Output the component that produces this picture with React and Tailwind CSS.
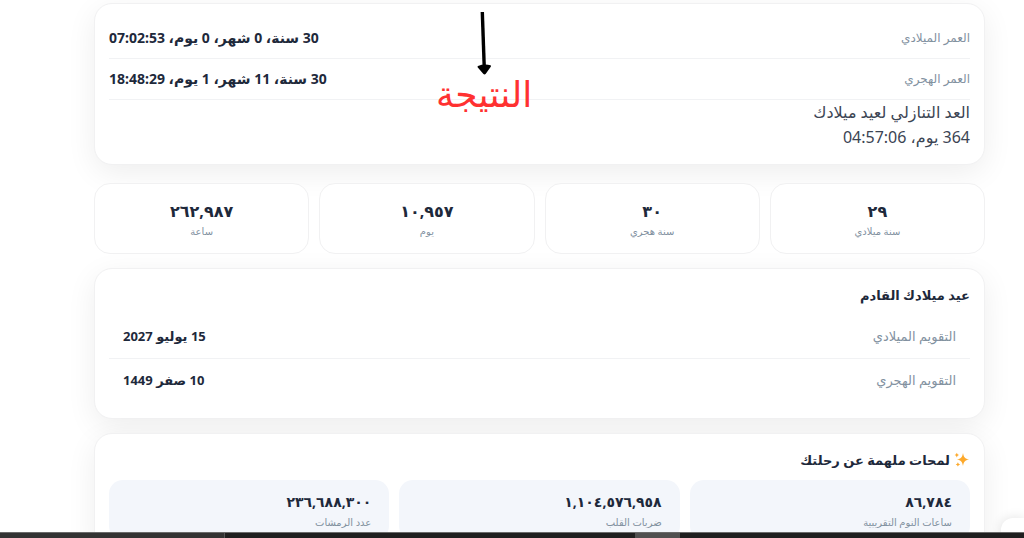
const ages = [
  { label: "العمر الميلادي", value: "30 سنة، 0 شهر، 0 يوم، 07:02:53" },
  { label: "العمر الهجري", value: "30 سنة، 11 شهر، 1 يوم، 18:48:29" },
];

const stats = [
  { label: "سنة ميلادي", value: "٢٩" },
  { label: "سنة هجري", value: "٣٠" },
  { label: "يوم", value: "١٠,٩٥٧" },
  { label: "ساعة", value: "٢٦٢,٩٨٧" },
];

const birthdays = [
  { label: "التقويم الميلادي", value: "15 يوليو 2027" },
  { label: "التقويم الهجري", value: "10 صفر 1449" },
];

const insights = [
  { label: "ساعات النوم التقريبية", value: "٨٦,٧٨٤" },
  { label: "ضربات القلب", value: "١,١٠٤,٥٧٦,٩٥٨" },
  { label: "عدد الرمشات", value: "٢٣٦,٦٨٨,٣٠٠" },
];

function Card({ className, children }) {
  return (
    <section
      className={`rounded-[18px] border border-[#f1f1f2] bg-white px-[14px] shadow-[0_8px_30px_rgba(0,0,0,0.07)] ${className}`}
    >
      {children}
    </section>
  );
}

function Sparkles() {
  return (
    <svg viewBox="0 0 16 16" className="h-4 w-4 shrink-0" fill="#fda92b" aria-hidden="true">
      <path d="M9 1C9.8 5.3 10.8 6.6 15.2 7.5C10.8 8.4 9.8 9.7 9 14C8.2 9.7 7.2 8.4 2.8 7.5C7.2 6.6 8.2 5.3 9 1Z" />
      <path d="M2.8 0.8Q3.2 2.7 5 3.1Q3.2 3.5 2.8 5.4Q2.4 3.5 0.6 3.1Q2.4 2.7 2.8 0.8Z" />
      <path d="M3.9 10.2Q4.3 12 6.1 12.4Q4.3 12.8 3.9 14.6Q3.5 12.8 1.7 12.4Q3.5 12 3.9 10.2Z" />
    </svg>
  );
}

function ResultNote() {
  return (
    <div className="absolute top-3 left-[42%] flex w-[108px] flex-col items-center">
      <svg viewBox="0 0 16 64" className="h-16 w-4" aria-hidden="true">
        <path d="M6.3 0L8.2 54" stroke="#000" strokeWidth="3.4" fill="none" />
        <path d="M2 54Q8 51.5 14.5 53.2Q15.6 53.8 14.6 55L9.8 61.8Q8.6 63.2 7.2 61.8L1.8 55.6Q1 54.5 2 54Z" />
      </svg>
      <p className="text-4xl leading-9 text-[#ff3131]">النتيجة</p>
    </div>
  );
}

export default function App() {
  return (
    <div
      dir="rtl"
      className="relative flex h-screen flex-col overflow-hidden bg-white font-['Noto_Sans','DejaVu_Sans',sans-serif] text-[#1e293b]"
    >
      <main className="min-h-0 flex-1 overflow-hidden pt-[3px] pr-[39px] pl-[94px]">
        <Card className="pt-[14px] pb-[14px]">
          <dl>
            {ages.map((age) => (
              <div
                key={age.label}
                className="flex h-[41px] items-center justify-between border-b border-[#f1f2f4]"
              >
                <dt className="text-xs text-[#82919f]">{age.label}</dt>
                <dd className="text-sm font-bold">{age.value}</dd>
              </div>
            ))}
          </dl>
          <div className="text-base leading-[25px] text-[#3b4453]">
            <p>العد التنازلي لعيد ميلادك</p>
            <p>364 يوم، 04:57:06</p>
          </div>
        </Card>

        <dl className="mt-[18px] grid grid-cols-4 gap-[10px]">
          {stats.map((stat) => (
            <div
              key={stat.label}
              className="flex h-[71px] flex-col-reverse items-center justify-center rounded-2xl border border-[#f1f1f2] bg-white"
            >
              <dt className="text-[10px] leading-4 text-[#82919f]">{stat.label}</dt>
              <dd className="text-base leading-6 font-bold">{stat.value}</dd>
            </div>
          ))}
        </dl>

        <Card className="mt-[14px] pt-[14px] pb-[15px]">
          <h2 className="text-[13px] leading-6 font-bold">عيد ميلادك القادم</h2>
          <dl className="mt-2">
            {birthdays.map((day) => (
              <div
                key={day.label}
                className="flex h-11 items-center justify-between border-b border-[#f1f2f4] px-[14px] last:border-b-0"
              >
                <dt className="text-[13px] text-[#82919f]">{day.label}</dt>
                <dd className="text-[13px] font-bold">{day.value}</dd>
              </div>
            ))}
          </dl>
        </Card>

        <Card className="mt-[14px] pt-[14px] pb-4">
          <h2 className="flex items-center gap-1 text-[13px] leading-6 font-bold">
            <Sparkles />
            لمحات ملهمة عن رحلتك
          </h2>
          <dl className="mt-2 grid grid-cols-3 gap-[10px]">
            {insights.map((item) => (
              <div
                key={item.label}
                className="flex flex-col-reverse rounded-[14px] bg-[#f3f6fb] px-[18px] py-[10px]"
              >
                <dt className="text-[10px] leading-4 text-[#82919f]">{item.label}</dt>
                <dd className="text-sm leading-6 font-bold">{item.value}</dd>
              </div>
            ))}
          </dl>
        </Card>
      </main>

      <ResultNote />
      <div className="absolute right-0 bottom-0 h-5 w-[23px] rounded-tl-xl bg-white shadow-[0_0_12px_rgba(0,0,0,0.12)]" />

      {/* desktop taskbar */}
      <footer dir="ltr" className="relative flex h-[6px] shrink-0 border-t border-[#6b6b6b] bg-[#1f1f1f]">
        <div className="w-[22%] border-r border-[#555] bg-[#333]" />
        <div className="w-[40%]" />
        <div className="w-[45px] bg-[#505050]" />
      </footer>
    </div>
  );
}
